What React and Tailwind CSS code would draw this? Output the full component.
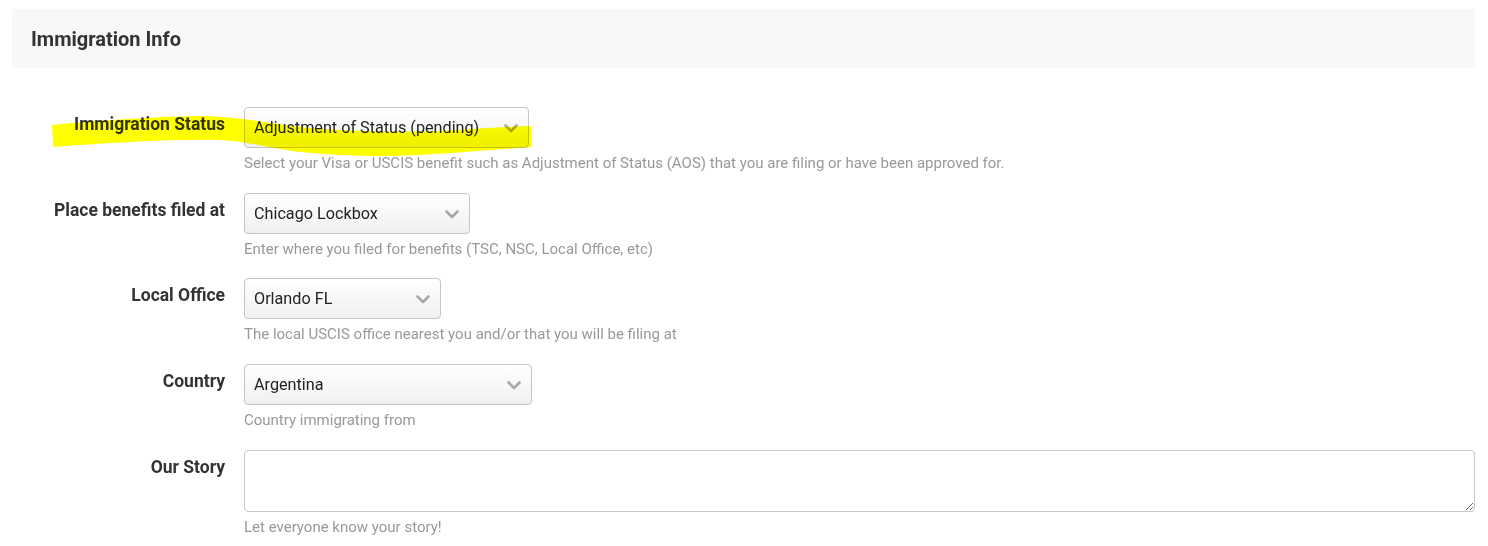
import React from "react";

const font = { fontFamily: "Roboto, 'Liberation Sans', sans-serif" };

function Chevron() {
  return (
    <svg width="14" height="9" viewBox="0 0 14 9" className="shrink-0">
      <path d="M1.5 1.5 L7 7 L12.5 1.5" fill="none" stroke="#a8a8a8" strokeWidth="2.6" strokeLinecap="round" strokeLinejoin="round" />
    </svg>
  );
}

function Select({ value, w }) {
  return (
    <div
      className={`flex h-[41px] items-center justify-between rounded-[4px] border border-[#c4c4c4] bg-gradient-to-b from-white to-[#f0f0f0] pl-[9px] pr-[10px] pt-[1px] text-[16.2px] text-[#222] ${w}`}
    >
      <span>{value}</span>
      <Chevron />
    </div>
  );
}

function Row({ label, children, help, mb = "mb-[21px]" }) {
  return (
    <div className={`flex gap-[19px] ${mb}`}>
      <div className="w-[213px] shrink-0 pt-[5px] text-right text-[17.5px] font-bold leading-[24px] text-[#333]">{label}</div>
      <div className="flex-1">
        {children}
        <div className="mt-[5px] text-[15px] leading-[20px] text-[#999]">{help}</div>
      </div>
    </div>
  );
}

export default function App() {
  return (
    <div className="relative min-h-[546px] w-[1488px] bg-white pl-[12px] pr-[13px] pt-[9px]" style={font}>
      <div className="flex h-[59px] items-center bg-[#f8f8f8] pl-[19px] text-[20px] font-bold text-[#333]">
        Immigration Info
      </div>
      <div className="pt-[39px]">
        <Row label="Immigration Status" help="Select your Visa or USCIS benefit such as Adjustment of Status (AOS) that you are filing or have been approved for." mb="mb-[20px]">
          <Select value="Adjustment of Status (pending)" w="w-[285px]" />
        </Row>
        <Row label="Place benefits filed at" help="Enter where you filed for benefits (TSC, NSC, Local Office, etc)" mb="mb-[19px]">
          <Select value="Chicago Lockbox" w="w-[226px]" />
        </Row>
        <Row label="Local Office" help="The local USCIS office nearest you and/or that you will be filing at" mb="mb-[20px]">
          <Select value="Orlando FL" w="w-[197px]" />
        </Row>
        <Row label="Country" help="Country immigrating from" mb="mb-[20px]">
          <Select value="Argentina" w="w-[288px]" />
        </Row>
        <Row label="Our Story" help="Let everyone know your story!" mb="mb-0">
          <textarea className="block h-[62px] w-full resize-y rounded-[4px] border border-[#c8c8c8] bg-white outline-none" />
        </Row>
      </div>
      <svg
        className="pointer-events-none absolute left-0 top-0 mix-blend-multiply"
        width="600"
        height="200"
        viewBox="0 0 600 200"
      >
        <path
          d="M52 125 C 90 121, 150 117, 195 116 C 240 116, 270 124, 310 128 C 360 132, 420 133, 470 129 C 500 127, 520 126, 531 126 L 532 147 C 500 149, 470 152, 420 155 C 380 157, 340 156, 300 152 C 270 148, 250 142, 220 140 C 170 139, 110 143, 53 147 Z"
          fill="#ffff00"
        />
      </svg>
    </div>
  );
}
